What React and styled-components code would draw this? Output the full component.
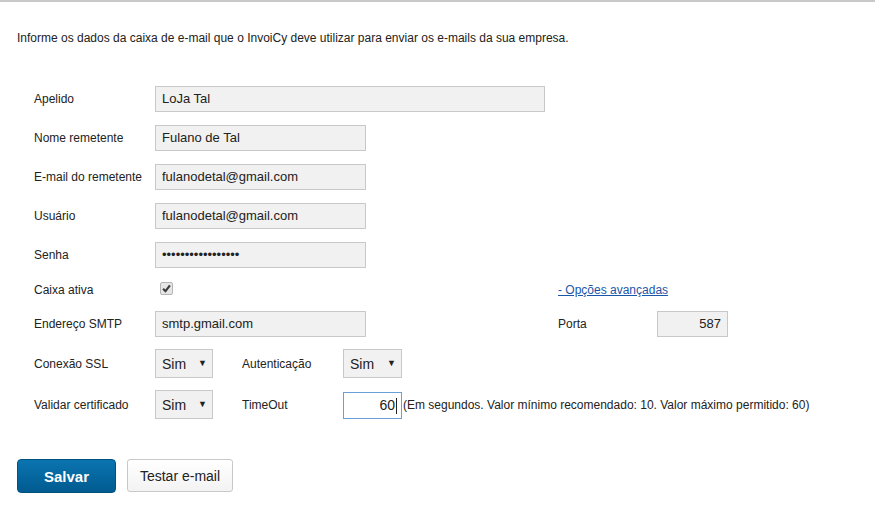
import styled, { createGlobalStyle } from "styled-components";

const GlobalStyle = createGlobalStyle`
  html, body {
    margin: 0;
    padding: 0;
    background: #ffffff;
    font-family: "Liberation Sans", Arial, sans-serif;
    color: #222222;
  }
`;

const Page = styled.div`
  border-top: 2px solid #c8c8c8;
  width: 875px;
  height: 513px;
  padding: 0 17px;
  box-sizing: border-box;
`;

const Intro = styled.p`
  margin: 0;
  padding-top: 28px;
  font-size: 12px;
  line-height: 16px;
  color: #222222;
`;

const Form = styled.div`
  display: grid;
  margin-top: 33px;
  padding-left: 17px;
  grid-template-columns: 121px 87px 101px 215px 99px auto;
  grid-template-rows: 39px 39px 39px 39px 39px 31px 37px 43px 39px;
  align-items: center;
`;

const Label = styled.span`
  font-size: 12px;
  color: #222222;
  grid-column: ${(p) => p.$col || "auto"};
`;

const TextInput = styled.input`
  grid-column: ${(p) => p.$col || "2 / span 3"};
  width: ${(p) => p.$w}px;
  height: 26px;
  box-sizing: border-box;
  border: 1px solid #c8c8c8;
  background: #f1f1f1;
  padding: 0 6px;
  font-family: "Liberation Sans", Arial, sans-serif;
  font-size: 13px;
  color: #222222;
  text-align: ${(p) => p.$align || "left"};
  outline: none;
`;

const CheckBox = styled.span`
  grid-column: 2;
  width: 11px;
  height: 11px;
  margin-left: 5px;
  margin-top: -2px;
  border: 1px solid #b4b4b4;
  border-radius: 2px;
  background: #e6e6e6;
  display: flex;
  align-items: center;
  justify-content: center;
`;

const Link = styled.a`
  grid-column: 5 / span 2;
  font-size: 12px;
  color: #1a56a8;
  text-decoration: underline;
  cursor: pointer;
`;

const SelectWrap = styled.div`
  grid-column: ${(p) => p.$col};
  position: relative;
  width: ${(p) => p.$w}px;
  height: 29px;
`;

const Select = styled.select`
  appearance: none;
  width: 100%;
  height: 100%;
  box-sizing: border-box;
  border: 1px solid #c8c8c8;
  background: #f1f1f1;
  padding: 0 0 0 6px;
  font-family: "Liberation Sans", Arial, sans-serif;
  font-size: 14px;
  color: #222222;
  outline: none;
`;

const Arrow = styled.span`
  position: absolute;
  right: 6px;
  top: 9px;
  font-size: 9px;
  color: #222222;
  pointer-events: none;
`;

const TimeoutCell = styled.div`
  grid-column: 4 / -1;
  display: flex;
  align-items: center;
  margin-top: 1px;
`;

const TimeoutBox = styled.div`
  position: relative;
  width: 59px;
  height: 27px;
  box-sizing: border-box;
  border: 1px solid #6b9fd8;
  background: #ffffff;
  display: flex;
  align-items: center;
  justify-content: flex-end;
  padding-right: 6px;
  font-size: 14px;
  color: #222222;
`;

const Caret = styled.span`
  position: absolute;
  right: 4px;
  top: 5px;
  width: 1px;
  height: 16px;
  background: #222222;
`;

const Note = styled.span`
  font-size: 12px;
  color: #222222;
  margin-left: 1px;
`;

const Actions = styled.div`
  display: flex;
  gap: 11px;
  margin-top: 35px;
`;

const Button = styled.button`
  height: ${(p) => (p.$primary ? 34 : 33)}px;
  width: ${(p) => (p.$primary ? 99 : 106)}px;
  box-sizing: border-box;
  border-radius: ${(p) => (p.$primary ? 4 : 3)}px;
  border: 1px solid ${(p) => (p.$primary ? "#00527f" : "#c9c9c9")};
  background: ${(p) =>
    p.$primary
      ? "linear-gradient(#0b74b0, #005b90)"
      : "linear-gradient(#ffffff, #f3f3f3)"};
  color: ${(p) => (p.$primary ? "#ffffff" : "#222222")};
  font-family: "Liberation Sans", Arial, sans-serif;
  font-size: ${(p) => (p.$primary ? 15 : 14)}px;
  font-weight: ${(p) => (p.$primary ? 700 : 400)};
  cursor: pointer;
`;

const fields = [
  { label: "Apelido", value: "LoJa Tal", w: 390 },
  { label: "Nome remetente", value: "Fulano de Tal", w: 211 },
  { label: "E-mail do remetente", value: "fulanodetal@gmail.com", w: 211 },
  { label: "Usuário", value: "fulanodetal@gmail.com", w: 211 },
  { label: "Senha", value: "passwordpassword1", w: 211, type: "password" },
];

const SimSelect = ({ col, w }) => (
  <SelectWrap $col={col} $w={w}>
    <Select defaultValue="sim">
      <option value="sim">Sim</option>
      <option value="nao">Não</option>
    </Select>
    <Arrow>▼</Arrow>
  </SelectWrap>
);

const App = () => {
  return (
    <>
      <GlobalStyle />
      <Page>
        <Intro>
          Informe os dados da caixa de e-mail que o InvoiCy deve utilizar para
          enviar os e-mails da sua empresa.
        </Intro>
        <Form>
          {fields.map((f) => (
            <>
              <Label key={f.label + "l"} $col="1">
                {f.label}
              </Label>
              <TextInput
                key={f.label + "i"}
                type={f.type || "text"}
                defaultValue={f.value}
                $w={f.w}
              />
              <span key={f.label + "s"} style={{ gridColumn: "5 / -1" }} />
            </>
          ))}

          <Label $col="1">Caixa ativa</Label>
          <CheckBox>
            <svg width="9" height="9" viewBox="0 0 10 10">
              <path
                d="M1.2 5.2 L3.9 8 L8.8 1.6"
                fill="none"
                stroke="#3c3c3c"
                strokeWidth="2.4"
              />
            </svg>
          </CheckBox>
          <span style={{ gridColumn: "3 / span 2" }} />
          <Link>- Opções avançadas</Link>

          <Label $col="1">Endereço SMTP</Label>
          <TextInput defaultValue="smtp.gmail.com" $w={211} />
          <Label $col="5">Porta</Label>
          <TextInput defaultValue="587" $w={71} $col="6" $align="right" />

          <Label $col="1">Conexão SSL</Label>
          <SimSelect col="2" w={58} />
          <Label $col="3">Autenticação</Label>
          <SimSelect col="4" w={59} />
          <span style={{ gridColumn: "5 / -1" }} />

          <Label $col="1">Validar certificado</Label>
          <SimSelect col="2" w={58} />
          <Label $col="3">TimeOut</Label>
          <TimeoutCell>
            <TimeoutBox>
              60
              <Caret />
            </TimeoutBox>
            <Note>
              (Em segundos. Valor mínimo recomendado: 10. Valor máximo
              permitido: 60)
            </Note>
          </TimeoutCell>
        </Form>
        <Actions>
          <Button $primary>Salvar</Button>
          <Button>Testar e-mail</Button>
        </Actions>
      </Page>
    </>
  );
};

export default App;
